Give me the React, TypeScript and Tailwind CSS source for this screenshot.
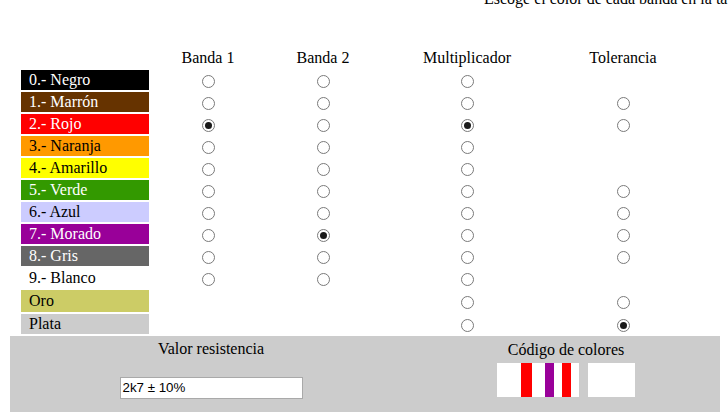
import React from "react";

type Row = {
  label: string;
  bg: string;
  text: string;
  tall?: boolean;
  b1?: boolean;
  b2?: boolean;
  mult?: boolean;
  tol?: boolean;
};

const rows: Row[] = [
  { label: "0.- Negro", bg: "bg-[#000000]", text: "text-white", b1: true, b2: true, mult: true },
  { label: "1.- Marrón", bg: "bg-[#663300]", text: "text-white", b1: true, b2: true, mult: true, tol: true },
  { label: "2.- Rojo", bg: "bg-[#ff0000]", text: "text-white", b1: true, b2: true, mult: true, tol: true },
  { label: "3.- Naranja", bg: "bg-[#ff9900]", text: "text-black", b1: true, b2: true, mult: true },
  { label: "4.- Amarillo", bg: "bg-[#ffff00]", text: "text-black", b1: true, b2: true, mult: true },
  { label: "5.- Verde", bg: "bg-[#339900]", text: "text-white", b1: true, b2: true, mult: true, tol: true },
  { label: "6.- Azul", bg: "bg-[#ccccff]", text: "text-black", b1: true, b2: true, mult: true, tol: true },
  { label: "7.- Morado", bg: "bg-[#990099]", text: "text-white", b1: true, b2: true, mult: true, tol: true },
  { label: "8.- Gris", bg: "bg-[#666666]", text: "text-white", b1: true, b2: true, mult: true, tol: true },
  { label: "9.- Blanco", bg: "bg-white", text: "text-black", b1: true, b2: true, mult: true },
  { label: "Oro", bg: "bg-[#cccc66]", text: "text-black", tall: true, mult: true, tol: true },
  { label: "Plata", bg: "bg-[#cccccc]", text: "text-black", mult: true, tol: true },
];

// selected: banda1 = Rojo, banda2 = Morado, multiplicador = Rojo, tolerancia = Plata
const checked = { b1: 2, b2: 7, mult: 2, tol: 11 };

function Radio({ on }: { on: boolean }) {
  return (
    <span className="mt-[3px] flex h-[13px] w-[13px] items-center justify-center rounded-full border border-[#7a7a7a] bg-white">
      {on && <span className="h-[7px] w-[7px] rounded-full bg-[#1a1a1a]" />}
    </span>
  );
}

function Cell({ show, on }: { show?: boolean; on: boolean }) {
  return <div className="flex items-center justify-center">{show && <Radio on={on} />}</div>;
}

export default function App() {
  return (
    <div className="h-[412px] w-[728px] overflow-hidden bg-white font-['Liberation_Serif',serif] text-[16px] text-black">
      <div className="-mt-[10px] h-[18px] whitespace-nowrap pl-[484px] leading-[18px]">
        Escoge el color de cada banda en la tabla para calcular el valor de la resistencia
      </div>

      <div className="mt-[40px] grid grid-cols-[128px_118px_112px_176px_136px] gap-y-[2px] pl-[21px]">
        <div className="h-[20px]" />
        <div className="text-center leading-[20px]">Banda 1</div>
        <div className="text-center leading-[20px]">Banda 2</div>
        <div className="text-center leading-[20px]">Multiplicador</div>
        <div className="text-center leading-[20px]">Tolerancia</div>

        {rows.map((r, i) => (
          <React.Fragment key={r.label}>
            <div className={`${r.bg} ${r.text} ${r.tall ? "h-[22px] leading-[22px]" : "h-[20px] leading-[20px]"} pl-[8px]`}>
              {r.label}
            </div>
            <Cell show={r.b1} on={checked.b1 === i} />
            <Cell show={r.b2} on={checked.b2 === i} />
            <Cell show={r.mult} on={checked.mult === i} />
            <Cell show={r.tol} on={checked.tol === i} />
          </React.Fragment>
        ))}
      </div>

      <div className="ml-[10px] mt-[2px] grid h-[76px] w-[710px] grid-cols-[402px_308px] bg-[#cccccc]">
        <div className="flex flex-col items-center pt-[4px]">
          <div className="leading-[18px]">Valor resistencia</div>
          <div className="mt-[19px] flex h-[22px] w-[183px] items-center border border-[#a9a9a9] bg-white pl-[2px] font-['Liberation_Sans',sans-serif] text-[13.33px]">
            2k7 ± 10%
          </div>
        </div>
        <div className="flex flex-col items-center pt-[5px]">
          <div className="leading-[18px]">Código de colores</div>
          <div className="mt-[4px] flex gap-[9px]">
            <div className="flex h-[34px] w-[82px] bg-white pl-[24px]">
              <div className="h-full w-[11px] bg-[#ff0000]" />
              <div className="ml-[13px] h-full w-[9px] bg-[#990099]" />
              <div className="ml-[8px] h-full w-[9px] bg-[#ff0000]" />
            </div>
            <div className="h-[34px] w-[47px] bg-white" />
          </div>
        </div>
      </div>
    </div>
  );
}
